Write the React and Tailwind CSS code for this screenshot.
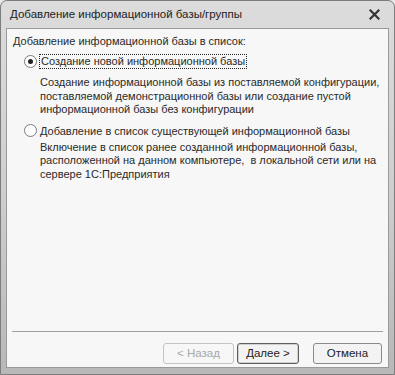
import React from "react";

const Radio = ({ checked }) => (
  <span className="w-[13px] h-[13px] rounded-full border border-[#7a7a7a] bg-white flex items-center justify-center shrink-0">
    {checked && <span className="w-[5px] h-[5px] rounded-full bg-[#222]" />}
  </span>
);

const Button = ({ children, disabled, primary, className }) => (
  <div
    className={
      "h-[21px] rounded-[3px] border flex items-center justify-center text-[11.5px] " +
      (disabled
        ? "border-[#c4c4c4] text-[#a8a8a8] bg-[#f7f7f7] "
        : primary
        ? "border-[#5e5e5e] text-[#222] bg-[#f3f3f3] shadow-[inset_0_0_0_1px_#d0d0d0] "
        : "border-[#8a8a8a] text-[#222] bg-[#f3f3f3] ") +
      className
    }
  >
    {children}
  </div>
);

export default function App() {
  return (
    <div className="w-[395px] h-[375px] bg-[#e8e8e8] overflow-hidden" style={{ fontFamily: '"Liberation Sans", Arial, sans-serif' }}>
      <div className="h-full rounded-t-[7px] border border-[#7d7d7d] bg-gradient-to-b from-[#dcdcdc] via-[#cfcfcf] to-[#b8b8b8] flex flex-col px-[5px] pb-[6px]">
        <div className="h-[27px] flex items-center justify-between pl-[4px] pr-[9px] shrink-0">
          <span className="text-[11.5px] text-[#222] whitespace-nowrap">Добавление информационной базы/группы</span>
          <svg width="11" height="11" viewBox="0 0 11 11">
            <path d="M1.5 1.5 L9.5 9.5 M9.5 1.5 L1.5 9.5" stroke="#333" strokeWidth="2.2" strokeLinecap="square" />
          </svg>
        </div>
        <div className="flex-1 bg-[#f7f7f7] border border-[#9a9a9a] flex flex-col text-[#2a2a2a] text-[11px] whitespace-nowrap">
          <div className="pl-[6px] pt-[5px] leading-[14px]">Добавление информационной базы в список:</div>
          <div className="flex items-center pl-[17px] mt-[6px]">
            <Radio checked />
            <span className="ml-[2px] px-[1px] border border-dotted border-[#222] leading-[13px]">Создание новой информационной базы</span>
          </div>
          <div className="pl-[33px] mt-[7px] leading-[13.5px]">
            Создание информационной базы из поставляемой конфигурации,<br />
            поставляемой демонстрационной базы или создание пустой<br />
            информационной базы без конфигурации
          </div>
          <div className="flex items-center pl-[17px] mt-[7px]">
            <Radio />
            <span className="ml-[3px] leading-[14px]">Добавление в список существующей информационной базы</span>
          </div>
          <div className="pl-[33px] mt-[3px] leading-[13.5px]">
            Включение в список ранее созданной информационной базы,<br />
            расположенной на данном компьютере,&nbsp; в локальной сети или на<br />
            сервере 1С:Предприятия
          </div>
          <div className="flex-1" />
          <div className="mx-[5px] h-[1px] bg-[#a0a0a0]" />
          <div className="flex justify-end pr-[6px] pt-[11px] pb-[3px]">
            <Button disabled className="w-[71px]">&lt; Назад</Button>
            <Button primary className="w-[62px] ml-[3px]">Далее &gt;</Button>
            <Button className="w-[69px] ml-[14px]">Отмена</Button>
          </div>
        </div>
      </div>
    </div>
  );
}
